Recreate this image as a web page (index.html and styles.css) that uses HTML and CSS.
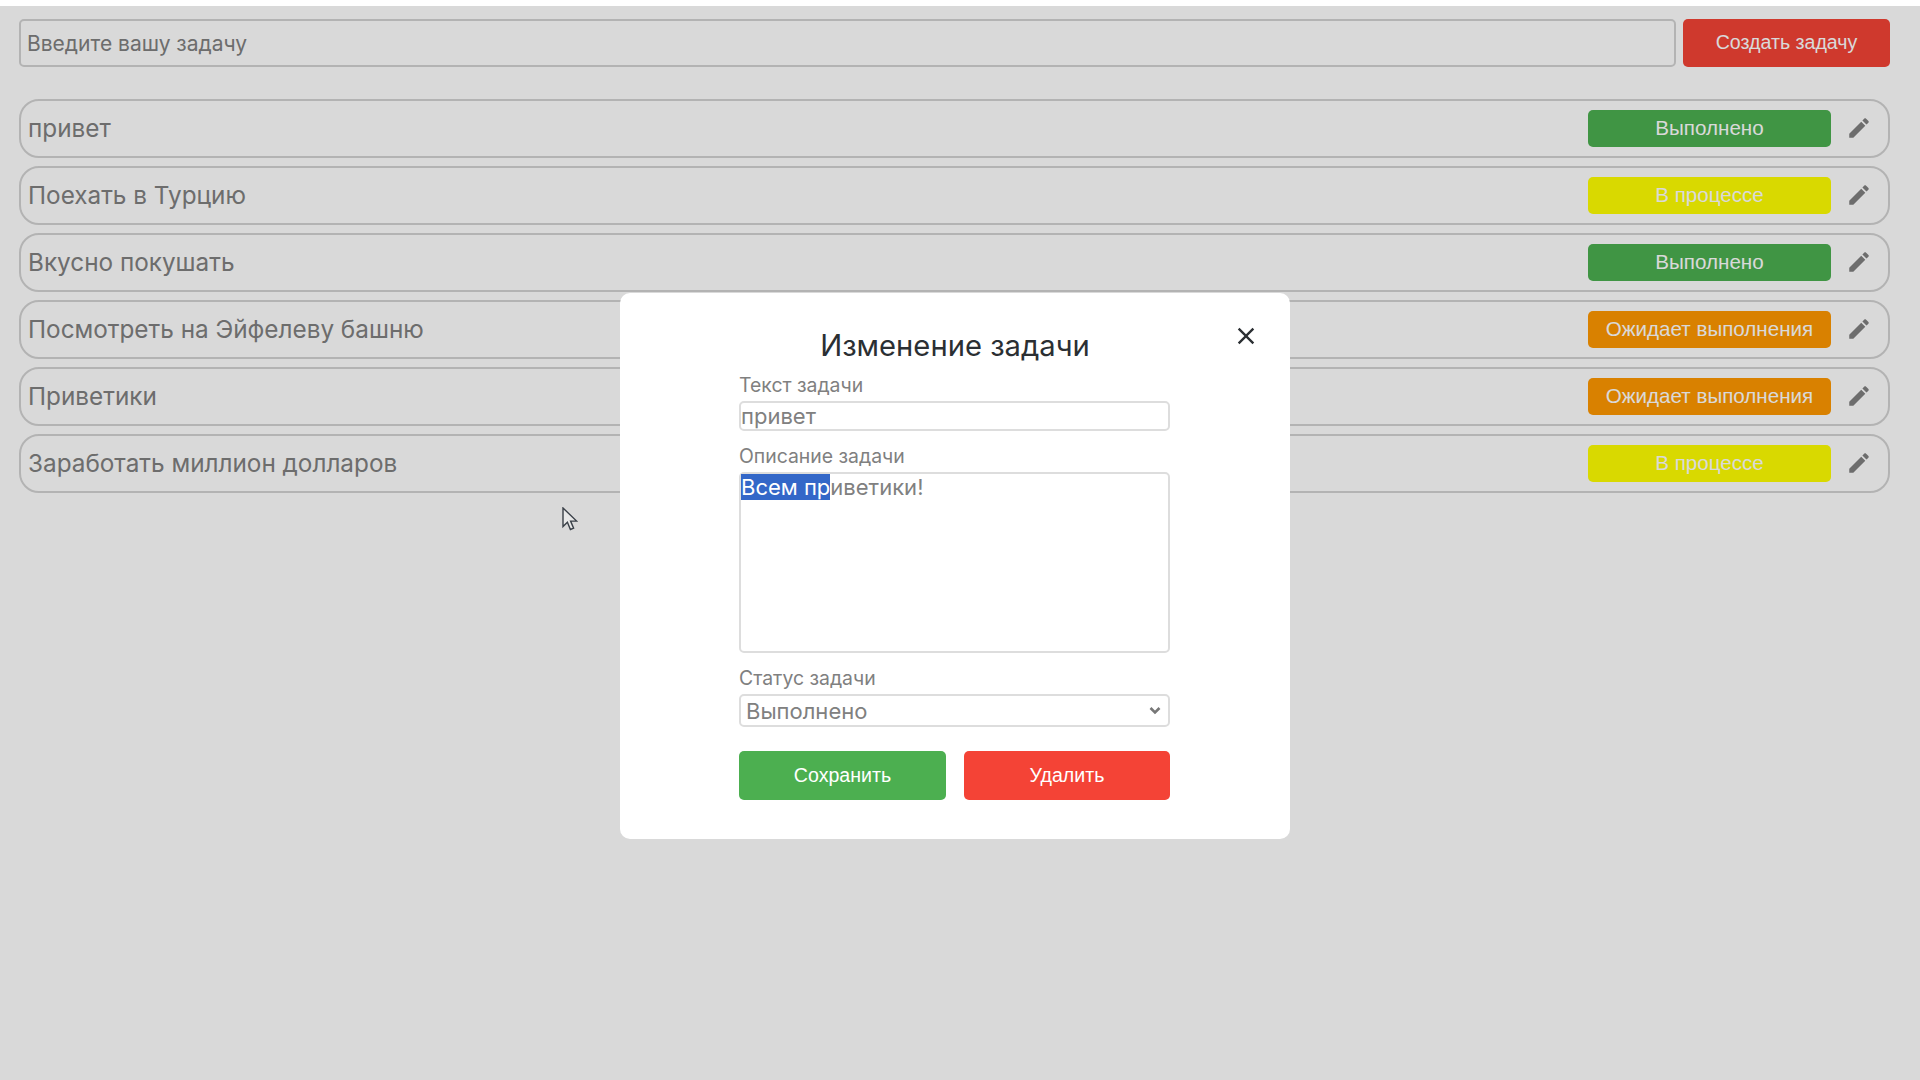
FILE: index.html
```html
<!DOCTYPE html>
<html lang="en">
  <head>
    <meta charset="UTF-8" />
    <meta name="viewport" content="width=device-width, initial-scale=1.0" />
    <title>Задачи</title>
    <link rel="stylesheet" href="styles.css">
  </head>
  <body>
    <div class="page">
      <div class="create-bar">
        <input class="create-input" type="text" placeholder="Введите вашу задачу" />
        <button class="create-button">Создать задачу</button>
      </div>

      <div class="task-list">
        <div class="task">
          <span class="task-title">привет</span>
          <span class="status done">Выполнено</span>
          <svg class="edit-icon" viewBox="0 0 24 24"><path d="M3 17.25V21h3.75L17.81 9.94l-3.75-3.75L3 17.25zM20.71 7.04c.39-.39.39-1.02 0-1.41l-2.34-2.34c-.39-.39-1.02-.39-1.41 0l-1.83 1.83 3.75 3.75 1.83-1.83z"/></svg>
        </div>
        <div class="task">
          <span class="task-title">Поехать в Турцию</span>
          <span class="status progress">В процессе</span>
          <svg class="edit-icon" viewBox="0 0 24 24"><path d="M3 17.25V21h3.75L17.81 9.94l-3.75-3.75L3 17.25zM20.71 7.04c.39-.39.39-1.02 0-1.41l-2.34-2.34c-.39-.39-1.02-.39-1.41 0l-1.83 1.83 3.75 3.75 1.83-1.83z"/></svg>
        </div>
        <div class="task">
          <span class="task-title">Вкусно покушать</span>
          <span class="status done">Выполнено</span>
          <svg class="edit-icon" viewBox="0 0 24 24"><path d="M3 17.25V21h3.75L17.81 9.94l-3.75-3.75L3 17.25zM20.71 7.04c.39-.39.39-1.02 0-1.41l-2.34-2.34c-.39-.39-1.02-.39-1.41 0l-1.83 1.83 3.75 3.75 1.83-1.83z"/></svg>
        </div>
        <div class="task">
          <span class="task-title">Посмотреть на Эйфелеву башню</span>
          <span class="status waiting">Ожидает выполнения</span>
          <svg class="edit-icon" viewBox="0 0 24 24"><path d="M3 17.25V21h3.75L17.81 9.94l-3.75-3.75L3 17.25zM20.71 7.04c.39-.39.39-1.02 0-1.41l-2.34-2.34c-.39-.39-1.02-.39-1.41 0l-1.83 1.83 3.75 3.75 1.83-1.83z"/></svg>
        </div>
        <div class="task">
          <span class="task-title">Приветики</span>
          <span class="status waiting">Ожидает выполнения</span>
          <svg class="edit-icon" viewBox="0 0 24 24"><path d="M3 17.25V21h3.75L17.81 9.94l-3.75-3.75L3 17.25zM20.71 7.04c.39-.39.39-1.02 0-1.41l-2.34-2.34c-.39-.39-1.02-.39-1.41 0l-1.83 1.83 3.75 3.75 1.83-1.83z"/></svg>
        </div>
        <div class="task">
          <span class="task-title">Заработать миллион долларов</span>
          <span class="status progress">В процессе</span>
          <svg class="edit-icon" viewBox="0 0 24 24"><path d="M3 17.25V21h3.75L17.81 9.94l-3.75-3.75L3 17.25zM20.71 7.04c.39-.39.39-1.02 0-1.41l-2.34-2.34c-.39-.39-1.02-.39-1.41 0l-1.83 1.83 3.75 3.75 1.83-1.83z"/></svg>
        </div>
      </div>

      <!-- Modal for editing a task -->
      <div class="overlay">
        <div class="modal">
          <svg class="close-icon" viewBox="0 0 24 24"><path d="M19 6.41 17.59 5 12 10.59 6.41 5 5 6.41 10.59 12 5 17.59 6.41 19 12 13.41 17.59 19 19 17.59 13.41 12z"/></svg>
          <h2>Изменение задачи</h2>
          <div class="form">
            <label>Текст задачи</label>
            <input class="field-input" type="text" value="привет" />
            <label>Описание задачи</label>
            <div class="field-textarea"><span class="selected">Всем пр</span>иветики!</div>
            <label>Статус задачи</label>
            <select class="field-select">
              <option>Выполнено</option>
              <option>В процессе</option>
              <option>Ожидает выполнения</option>
            </select>
            <div class="modal-buttons">
              <button class="save-button">Сохранить</button>
              <button class="delete-button">Удалить</button>
            </div>
          </div>
        </div>
      </div>

      <svg class="cursor" viewBox="0 0 16 25"><path d="M1 1v18.5l4.4-4.2 3 7.2 3.2-1.4-3-7h6z"/></svg>
    </div>
  </body>
</html>
```

FILE: styles.css
```css
body {
  font-family: "Inter", "Liberation Sans", sans-serif;
  background: #fff;
  margin: 0;
  padding: 0;
  color: #808080;
}

.page {
  position: relative;
  margin-top: 6px;
  height: 1074px;
  box-sizing: border-box;
  padding: 13px 30px 0 19px;
  overflow: hidden;
}

.create-bar {
  display: flex;
  gap: 7px;
  margin-bottom: 32px;
}

.create-input {
  flex: 1;
  height: 48px;
  box-sizing: border-box;
  padding: 0 6px;
  border: 2px solid #d3d3d3;
  border-radius: 5px;
  background: #fff;
  font-family: "Inter", "Liberation Sans", sans-serif;
  font-size: 21px;
  color: #808080;
}

.create-input::placeholder {
  color: #808080;
  opacity: 1;
}

.create-button {
  width: 207px;
  height: 48px;
  padding: 0 0 2px;
  border: none;
  border-radius: 5px;
  background-color: #f44336;
  color: #fff;
  font-family: "Liberation Sans", sans-serif;
  font-size: 19.6px;
}

.task-list {
  display: flex;
  flex-direction: column;
  gap: 8px;
}

.task {
  display: flex;
  align-items: center;
  height: 59px;
  box-sizing: border-box;
  padding: 0 16px 0 7px;
  border: 2px solid #d3d3d3;
  border-radius: 20px;
  background: #fff;
}

.task-title {
  flex: 1;
  margin-bottom: 1px;
  font-size: 24.3px;
}

.status {
  width: 243px;
  height: 37px;
  line-height: 36px;
  text-align: center;
  border-radius: 5px;
  color: #fff;
  font-family: "Liberation Sans", sans-serif;
  font-size: 20.6px;
}

.done {
  background-color: #4caf50;
}

.progress {
  background-color: #ffff00;
}

.waiting {
  background-color: #ff9800;
}

.edit-icon {
  width: 26px;
  height: 26px;
  margin-left: 15px;
  margin-bottom: 2px;
  fill: #808080;
}

.overlay {
  position: absolute;
  top: 0;
  right: 0;
  bottom: 0;
  left: 0;
  display: flex;
  justify-content: center;
  padding-top: 287px;
  padding-right: 10px;
  background: rgba(0, 0, 0, 0.15);
}

.modal {
  position: relative;
  width: 670px;
  height: 546px;
  box-sizing: border-box;
  padding-top: 35px;
  border-radius: 10px;
  background: #fff;
}

.modal h2 {
  margin: 0 0 9px;
  text-align: center;
  font-size: 29.2px;
  font-weight: 400;
  line-height: 36px;
  color: #2b2f33;
}

.close-icon {
  position: absolute;
  top: 29px;
  right: 30px;
  width: 28px;
  height: 28px;
  fill: #2b2f33;
}

.form {
  display: flex;
  flex-direction: column;
  width: 431px;
  margin-left: 119px;
}

.form label {
  font-size: 19.4px;
  line-height: 24px;
  margin-bottom: 4px;
}

.field-input {
  height: 30px;
  box-sizing: border-box;
  margin-bottom: 13px;
  padding: 0;
  border: 2px solid #ddd;
  border-radius: 5px;
  font-family: "Inter", "Liberation Sans", sans-serif;
  font-size: 22px;
  color: #808080;
}

.field-textarea {
  height: 181px;
  box-sizing: border-box;
  margin-bottom: 13px;
  border: 2px solid #ddd;
  border-radius: 5px;
  font-size: 22px;
  line-height: 27px;
}

.selected {
  background-color: #3367c8;
  color: #fff;
}

.field-select {
  height: 33px;
  box-sizing: border-box;
  padding: 0 0 0 5px;
  border: 2px solid #ddd;
  border-radius: 5px;
  appearance: none;
  background: #fff url("data:image/svg+xml,%3Csvg xmlns='http://www.w3.org/2000/svg' viewBox='0 0 12 8'%3E%3Cpath d='M1.5 1.5 6 6l4.5-4.5' fill='none' stroke='%23777' stroke-width='2.6'/%3E%3C/svg%3E") no-repeat right 7px center / 12px 9px;
  font-family: "Inter", "Liberation Sans", sans-serif;
  font-size: 22px;
  color: #808080;
}

.modal-buttons {
  display: flex;
  justify-content: space-between;
  margin-top: 24px;
}

.save-button,
.delete-button {
  width: 207px;
  height: 49px;
  border: none;
  border-radius: 5px;
  color: #fff;
  font-family: "Liberation Sans", sans-serif;
  font-size: 19.6px;
}

.save-button {
  background-color: #4caf50;
}

.delete-button {
  width: 206px;
  background-color: #f44336;
}

.cursor {
  position: absolute;
  top: 501px;
  left: 562px;
  width: 16px;
  height: 25px;
  fill: #e8e8e8;
  stroke: #3a4048;
  stroke-width: 1.4;
}
```
